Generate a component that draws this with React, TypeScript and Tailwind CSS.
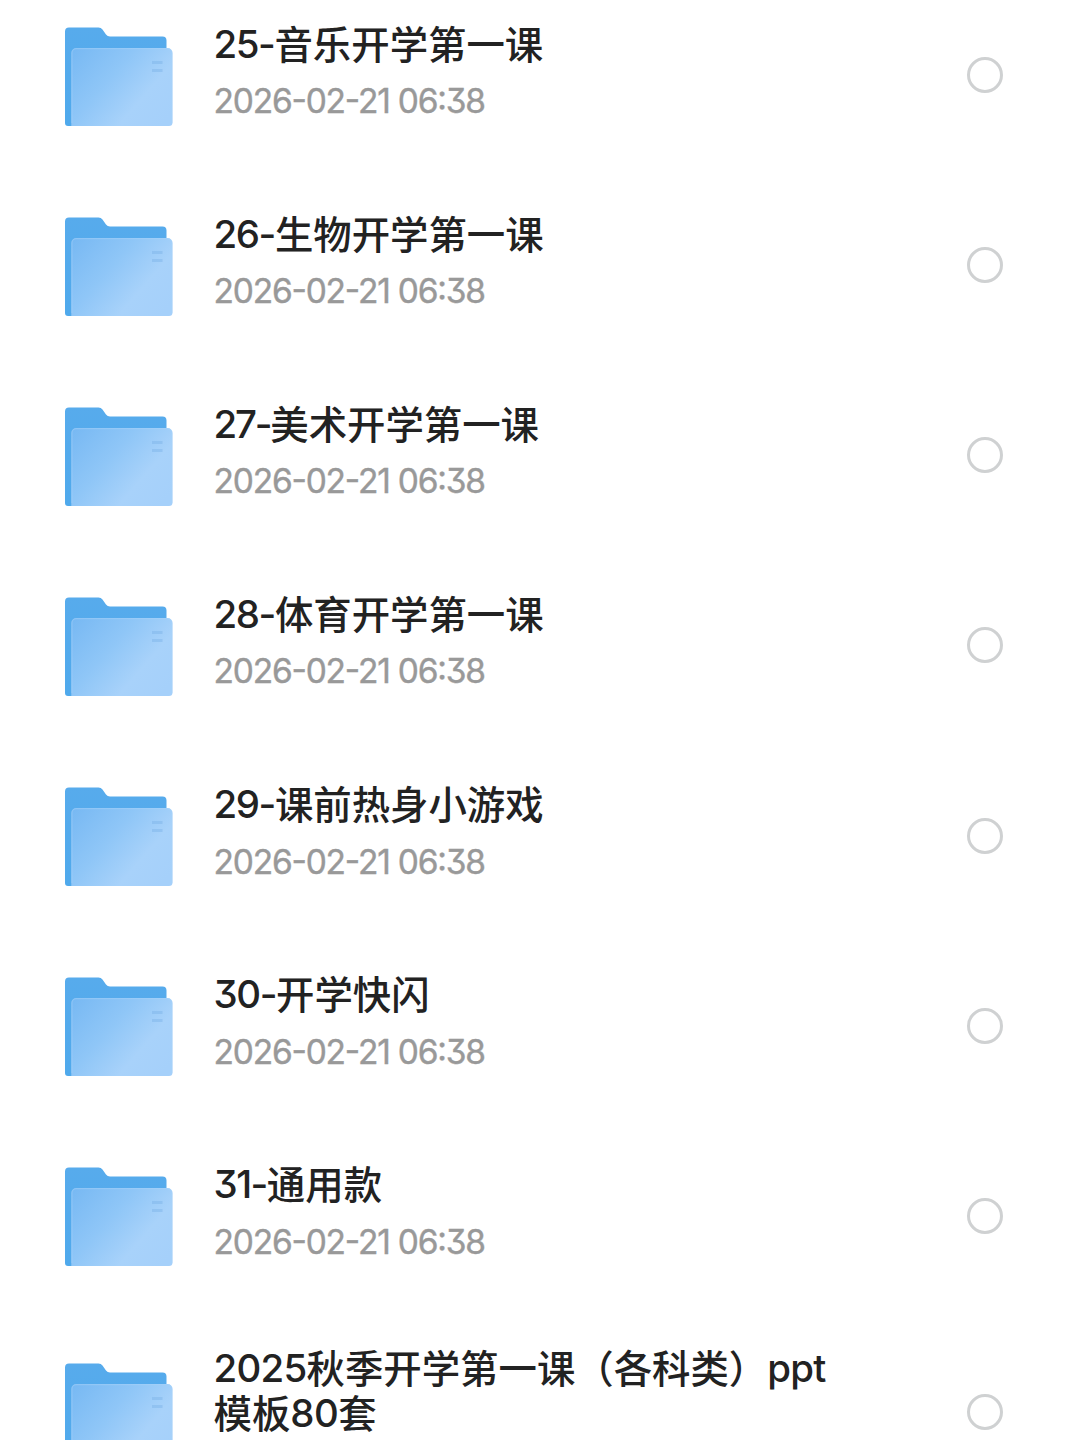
import React from "react";

type Item = { prefix: string; tracking: string; name: string };

const items: Item[] = [
  { prefix: "25-", tracking: "tracking-[-1.400px]", name: "音乐开学第一课" },
  { prefix: "26-", tracking: "tracking-[-1.400px]", name: "生物开学第一课" },
  { prefix: "27-", tracking: "tracking-[-2.200px]", name: "美术开学第一课" },
  { prefix: "28-", tracking: "tracking-[-1.400px]", name: "体育开学第一课" },
  { prefix: "29-", tracking: "tracking-[-1.400px]", name: "课前热身小游戏" },
  { prefix: "30-", tracking: "tracking-[-1.400px]", name: "开学快闪" },
  { prefix: "31-", tracking: "tracking-[-1.500px]", name: "通用款" },
];

function Folder() {
  return (
    <svg className="h-[100px] w-[109px] shrink-0" viewBox="0 0 109 100" fill="none">
      <defs>
        <linearGradient id="back" x1="0" y1="0" x2="0" y2="1">
          <stop offset="0" stopColor="#57abec" />
          <stop offset="1" stopColor="#4fa9ec" />
        </linearGradient>
        <linearGradient id="front" x1="10" y1="22" x2="98" y2="98" gradientUnits="userSpaceOnUse">
          <stop offset="0" stopColor="#78b9f3" />
          <stop offset="0.4" stopColor="#8fc6f7" />
          <stop offset="0.72" stopColor="#a8d2fa" />
          <stop offset="1" stopColor="#a5d0fa" />
        </linearGradient>
      </defs>
      <path d="M1 4.500a4 4 0 0 1 4-4h29.500q2.500 0 4 2l3.500 5q1.500 2 4 2h52.500a4 4 0 0 1 4 4v82.500a3 3 0 0 1-3 3h-95.500a3 3 0 0 1-3-3z" fill="url(#back)" />
      <path d="M7.300 26a5 5 0 0 1 5-5h91.200a5 5 0 0 1 5 5v69.500a3.500 3.500 0 0 1-3.500 3.500h-97.700z" fill="url(#front)" />
      <path d="M7.900 96V26a4.400 4.400 0 0 1 4.400-4.400h91.200a4.400 4.400 0 0 1 4.400 4.400v70" stroke="#a9d2f8" strokeOpacity=".45" strokeWidth="1.200" />
      <path d="M88 35.500h10.500M88 43.500h10.500" stroke="#7fb6ea" strokeOpacity=".5" strokeWidth="3" />
    </svg>
  );
}

function Latin({ className, children }: { className: string; children: string }) {
  return <span className={`align-[1px] font-['Inter'] leading-[0] [font-feature-settings:'cv09'] ${className}`}>{children}</span>;
}

function Circle() {
  return <div className="ml-auto mr-[77px] size-9 shrink-0 rounded-full border-[3.500px] border-[#cfd1d2]" />;
}

const titleClass = "text-[38.400px] leading-[45px] font-medium text-[#222] whitespace-nowrap";

export default function App() {
  return (
    <main className="h-[1440px] w-[1080px] overflow-hidden bg-white font-['Noto_Sans_CJK_SC',sans-serif]">
      <div className="-mt-5 flex flex-col">
        {items.map((item) => (
          <div key={item.prefix} className="flex h-[190.140px] shrink-0 items-center pl-16">
            <div className="pt-[3px]">
              <Folder />
            </div>
            <div className="ml-[40.500px] self-start pt-[39.500px]">
              <div className={titleClass}>
                <Latin className={item.tracking}>{item.prefix}</Latin>
                {item.name}
              </div>
              <div className="mt-[15.500px] font-['Inter',sans-serif] text-[33.500px] leading-[42px] tracking-[-1.200px] whitespace-nowrap text-[#999] [font-feature-settings:'cv09','case'] [-webkit-text-stroke:0.400px_#999]">
                2026-02-21 06:38
              </div>
            </div>
            <Circle />
          </div>
        ))}
        <div className="flex h-[202px] shrink-0 items-center pl-16">
          <div className="pt-[3px]">
            <Folder />
          </div>
          <div className="ml-[40.500px] self-start pt-[33.500px]">
            <div className={titleClass}>
              <Latin className="tracking-[-0.700px]">2025</Latin>
              秋季开学第一课（各科类）
              <Latin className="tracking-[-0.700px]">ppt</Latin>
            </div>
            <div className={titleClass}>
              模板
              <Latin className="tracking-[-0.500px]">80</Latin>
              套
            </div>
          </div>
          <Circle />
        </div>
      </div>
    </main>
  );
}
